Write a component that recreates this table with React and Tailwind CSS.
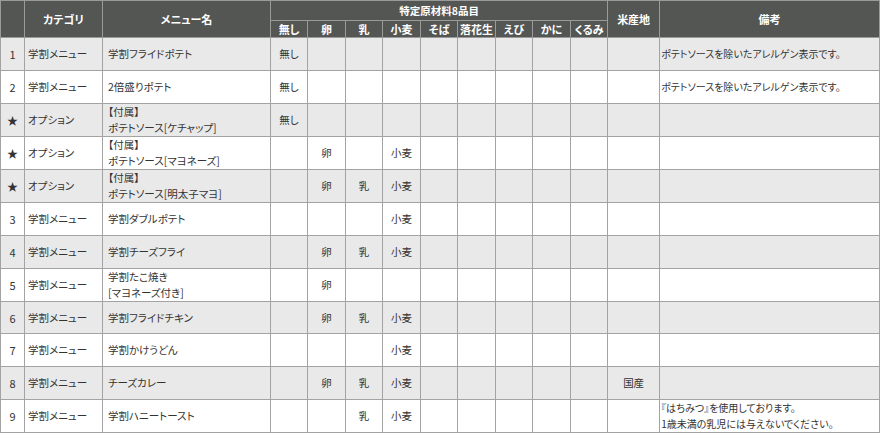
const rows = [
  { no: '1', cat: '学割メニュー', name: ['学割フライドポテト'], a: { none: '無し' }, note: ['ポテトソースを除いたアレルゲン表示です。'] },
  { no: '2', cat: '学割メニュー', name: ['2倍盛りポテト'], a: { none: '無し' }, note: ['ポテトソースを除いたアレルゲン表示です。'] },
  { no: '★', cat: 'オプション', name: ['【付属】', 'ポテトソース[ケチャップ]'], a: { none: '無し' }, note: [] },
  { no: '★', cat: 'オプション', name: ['【付属】', 'ポテトソース[マヨネーズ]'], a: { egg: '卵', wheat: '小麦' }, note: [] },
  { no: '★', cat: 'オプション', name: ['【付属】', 'ポテトソース[明太子マヨ]'], a: { egg: '卵', milk: '乳', wheat: '小麦' }, note: [] },
  { no: '3', cat: '学割メニュー', name: ['学割ダブルポテト'], a: { wheat: '小麦' }, note: [] },
  { no: '4', cat: '学割メニュー', name: ['学割チーズフライ'], a: { egg: '卵', milk: '乳', wheat: '小麦' }, note: [] },
  { no: '5', cat: '学割メニュー', name: ['学割たこ焼き', '[マヨネーズ付き]'], a: { egg: '卵' }, note: [] },
  { no: '6', cat: '学割メニュー', name: ['学割フライドチキン'], a: { egg: '卵', milk: '乳', wheat: '小麦' }, note: [] },
  { no: '7', cat: '学割メニュー', name: ['学割かけうどん'], a: { wheat: '小麦' }, note: [] },
  { no: '8', cat: '学割メニュー', name: ['チーズカレー'], a: { egg: '卵', milk: '乳', wheat: '小麦' }, rice: '国産', note: [] },
  { no: '9', cat: '学割メニュー', name: ['学割ハニートースト'], a: { milk: '乳', wheat: '小麦' }, note: ['『はちみつ』を使用しております。', '1歳未満の乳児には与えないでください。'] },
]

const allergens = [
  { key: 'none', label: '無し', w: 'w-[37px]' },
  { key: 'egg', label: '卵', w: 'w-[38px]' },
  { key: 'milk', label: '乳', w: 'w-[37px]' },
  { key: 'wheat', label: '小麦', w: 'w-[38px]' },
  { key: 'soba', label: 'そば', w: 'w-[37px]' },
  { key: 'peanut', label: '落花生', w: 'w-[38px]' },
  { key: 'shrimp', label: 'えび', w: 'w-[37px]' },
  { key: 'crab', label: 'かに', w: 'w-[38px]' },
  { key: 'walnut', label: 'くるみ', w: 'w-[37px]' },
]

const th = 'border border-[#9a9a9a] bg-[#545654] font-bold text-white'
const td = 'border border-[#a3a3a3] p-0'

export default function App() {
  return (
    <div className="h-[434px] w-[880px] overflow-hidden bg-white font-['Noto_Sans_CJK_JP','Noto_Sans',sans-serif] text-[10.5px] leading-4 text-[#333] [font-feature-settings:'palt']">
      <table className="w-[880px] table-fixed border-collapse">
        <colgroup>
          <col className="w-[24px]" />
          <col className="w-[78px]" />
          <col className="w-[168px]" />
          {allergens.map((al) => (
            <col key={al.key} className={al.w} />
          ))}
          <col className="w-[52px]" />
          <col />
        </colgroup>
        <thead>
          <tr className="h-[20px]">
            <th rowSpan={2} className={th}></th>
            <th rowSpan={2} className={th + ' text-[11px]'}>カテゴリ</th>
            <th rowSpan={2} className={th + ' text-[11px]'}>メニュー名</th>
            <th colSpan={9} className={th}>特定原材料8品目</th>
            <th rowSpan={2} className={th + ' text-[11px]'}>米産地</th>
            <th rowSpan={2} className={th + ' text-[11px]'}>備考</th>
          </tr>
          <tr className="h-[16px]">
            {allergens.map((al) => (
              <th key={al.key} className={th + ' text-[11px]'}>
                {al.label}
              </th>
            ))}
          </tr>
        </thead>
        <tbody>
          {rows.map((row, i) => (
            <tr key={i} className={`h-[32.9px] ${i % 2 === 0 ? 'bg-[#e9e9e9]' : 'bg-white'}`}>
              <td className={td + ' text-center text-[11px]'}>{row.no}</td>
              <td className={td + ' pl-[3px]'}>{row.cat}</td>
              <td className={td + ' pl-[5px]'}>
                {row.name.map((line) => (
                  <div key={line}>{line}</div>
                ))}
              </td>
              {allergens.map((al) => (
                <td key={al.key} className={td + ' text-center'}>
                  {row.a[al.key] || ''}
                </td>
              ))}
              <td className={td + ' text-center'}>{row.rice || ''}</td>
              <td className={td + ' pl-[1px] text-[10px]'}>
                {row.note.map((line) => (
                  <div key={line}>{line}</div>
                ))}
              </td>
            </tr>
          ))}
        </tbody>
      </table>
    </div>
  )
}
